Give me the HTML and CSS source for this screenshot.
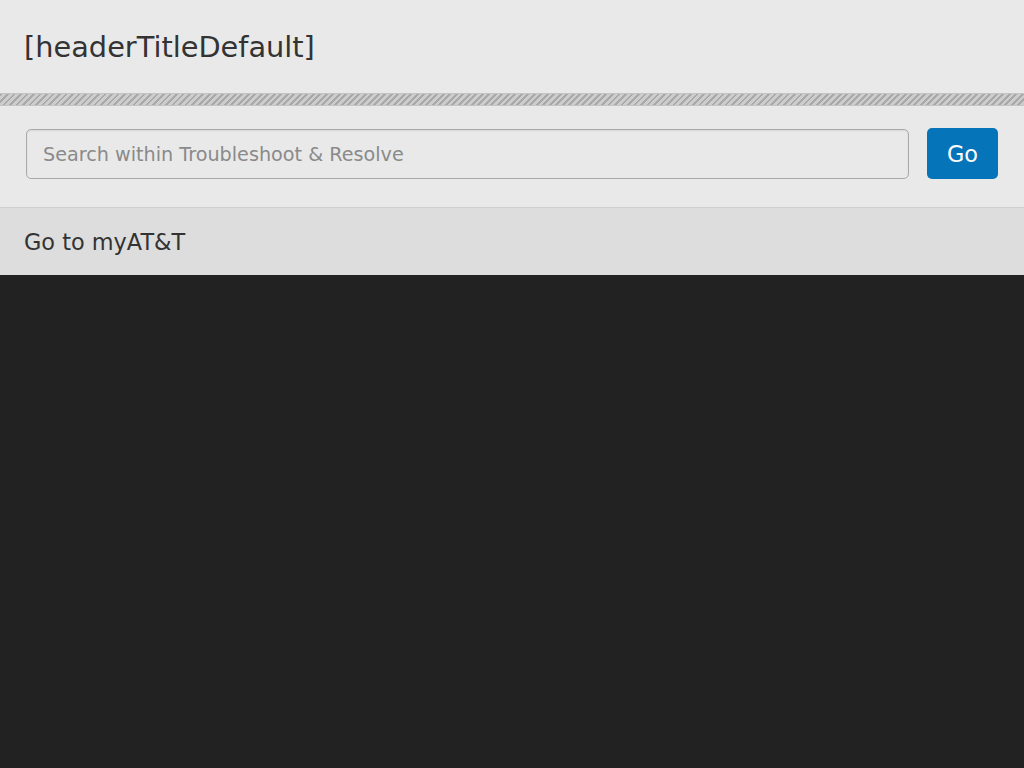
FILE: index.html
```html
<!DOCTYPE html>
<html>
<head>
<meta charset="utf-8">
<link rel="stylesheet" href="styles.css">
</head>
<body>
<header class="header">
  <h1 class="title">[headerTitleDefault]</h1>
</header>
<div class="stripe"></div>
<div class="search">
  <input class="search-input" type="text" placeholder="Search within Troubleshoot &amp; Resolve">
  <button class="go">Go</button>
</div>
<nav class="nav">
  <a class="nav-link">Go to myAT&amp;T</a>
</nav>
<main class="content"></main>
</body>
</html>
```
FILE: styles.css
```css
html, body {
  margin: 0;
  padding: 0;
  height: 100%;
}
body {
  font-family: "DejaVu Sans", sans-serif;
  background: #222222;
  display: flex;
  flex-direction: column;
}
.header {
  background: #e9e9e9;
  height: 93px;
  display: flex;
  align-items: center;
  padding: 0 24px;
  box-sizing: border-box;
}
.title {
  margin: 0;
  font-weight: normal;
  font-size: 28.8px;
  color: #333333;
  padding-top: 1px;
}
.stripe {
  height: 13px;
  background: repeating-linear-gradient(135deg, #a9a9a9 0, #a9a9a9 2px, #cdcdcd 2px, #cdcdcd 4.6px);
  border-top: 1px solid #c4c4c4;
  border-bottom: 1px solid #c4c4c4;
  box-sizing: border-box;
}
.search {
  background: #e9e9e9;
  display: flex;
  align-items: center;
  gap: 18px;
  padding: 22px 26px 28px 26px;
  border-bottom: 1px solid #cfcfcf;
}
.search-input {
  flex: 1;
  height: 50px;
  box-sizing: border-box;
  border: 1px solid #a9a9a9;
  border-radius: 5px;
  background: #e9e9e9;
  box-shadow: inset 0 1px 2px rgba(0, 0, 0, 0.08);
  padding: 0 16px;
  font-family: "DejaVu Sans", sans-serif;
  font-size: 19.2px;
  color: #333;
  margin-top: 1px;
}
.search-input::placeholder {
  color: #8a8a8a;
}
.go {
  width: 71px;
  height: 51px;
  border: none;
  border-radius: 5px;
  background: #0574b8;
  color: #ffffff;
  font-family: "DejaVu Sans", sans-serif;
  font-size: 22.4px;
}
.nav {
  background: #dddddd;
  height: 67px;
  display: flex;
  align-items: center;
  padding: 0 24px;
}
.nav-link {
  font-size: 22.4px;
  color: #333333;
}
.content {
  flex: 1;
  background: #222222;
}
```
